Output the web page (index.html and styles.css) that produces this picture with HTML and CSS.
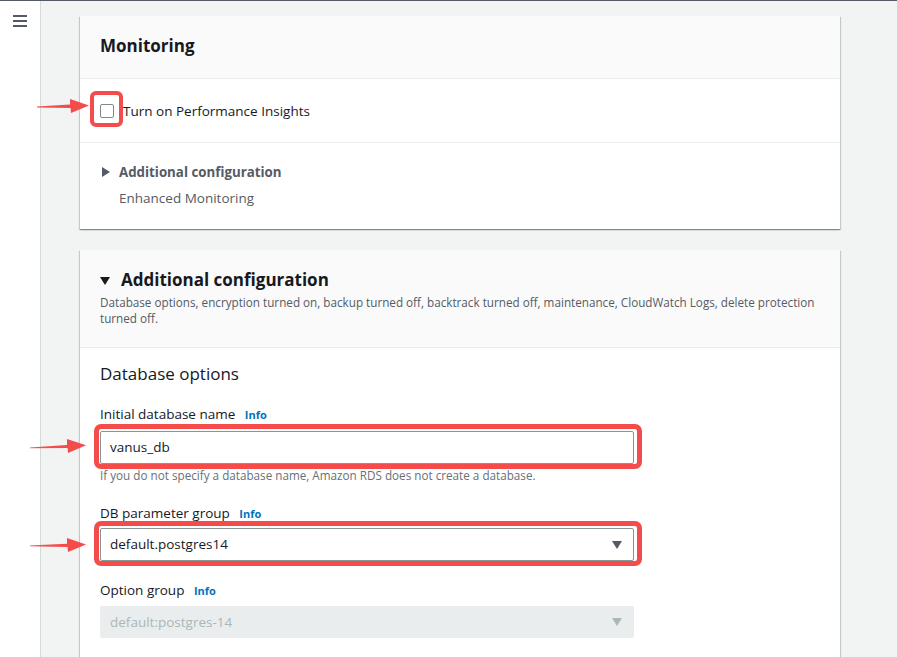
FILE: index.html
```html
<!DOCTYPE html>
<html>
<head>
<meta charset="utf-8">
<link rel="stylesheet" href="styles.css">
</head>
<body>
<div class="top-line"></div>
<div class="layout">
  <aside class="sidebar">
    <svg class="burger" width="14" height="12" viewBox="0 0 14 12"><rect x="0" y="0" width="14" height="2" fill="#545b64"/><rect x="0" y="5" width="14" height="2" fill="#545b64"/><rect x="0" y="10" width="14" height="2" fill="#545b64"/></svg>
  </aside>
  <main class="main">
    <section class="card">
      <div class="card-head">
        <h2 class="card-title">Monitoring</h2>
      </div>
      <div class="row check-row">
        <span class="checkbox hl-check"></span>
        <span class="check-label">Turn on Performance Insights</span>
        <svg class="arrow arrow-1" width="52" height="18" viewBox="0 0 52 18"><polygon points="0,9.6 33,7.6 33,2 52,8.6 34,16 33.6,11 0,10.4" fill="#f44b4b"/></svg>
      </div>
      <div class="row expand-row">
        <div class="expand-title"><span class="tri-right"></span>Additional configuration</div>
        <div class="expand-sub">Enhanced Monitoring</div>
      </div>
    </section>

    <section class="card card-2">
      <div class="card-head head-2">
        <h2 class="card-title"><span class="tri-down"></span>Additional configuration</h2>
        <p class="desc">Database options, encryption turned on, backup turned off, backtrack turned off, maintenance, CloudWatch Logs, delete protection turned off.</p>
      </div>
      <div class="card-body">
        <h3 class="sub-title">Database options</h3>
        <div class="field">
          <div class="label">Initial database name <span class="info">Info</span></div>
          <div class="control-wrap">
            <div class="input hl">vanus_db</div>
            <svg class="arrow arrow-2" width="56" height="18" viewBox="0 0 56 18"><polygon points="0,10.4 37,8 37,2 56,8.2 38,16 37.6,11 0,11.2" fill="#f44b4b"/></svg>
          </div>
          <div class="help">If you do not specify a database name, Amazon RDS does not create a database.</div>
        </div>
        <div class="field field-2">
          <div class="label">DB parameter group <span class="info">Info</span></div>
          <div class="control-wrap">
            <div class="input select hl">default.postgres14<span class="caret"></span></div>
            <svg class="arrow arrow-3" width="56" height="18" viewBox="0 0 56 18"><polygon points="0,9.4 37,7.8 37,2 56,8.6 38,16 37.6,11 0,10.2" fill="#f44b4b"/></svg>
          </div>
        </div>
        <div class="field field-3">
          <div class="label">Option group <span class="info">Info</span></div>
          <div class="input select disabled">default:postgres-14<span class="caret caret-dis"></span></div>
        </div>
      </div>
    </section>
  </main>
</div>
</body>
</html>
```
FILE: styles.css
```css
* { box-sizing: border-box; }
html, body { margin: 0; padding: 0; }
body {
  width: 897px;
  height: 657px;
  overflow: hidden;
  font-family: "Open Sans", "Noto Sans", sans-serif;
  color: #16191f;
  background: #f2f3f3;
}
.top-line { height: 1px; background: #545b64; }
.layout { display: flex; height: 656px; }
.sidebar {
  width: 41px;
  flex: none;
  background: #fff;
  border-right: 1px solid #d5dbdb;
  padding: 14px 0 0 13px;
}
.burger { display: block; }
.main { flex: 1; padding: 15px 0 0 39px; }
.card {
  width: 760px;
  background: #fff;
  box-shadow: 0 1px 1px 0 rgba(0,28,36,.3), 1px 1px 1px 0 rgba(0,28,36,.15), -1px 1px 1px 0 rgba(0,28,36,.15);
}
.card-2 { margin-top: 21px; }
.card-head {
  background: #fafafa;
  border-bottom: 1px solid #eaeded;
  padding: 19px 20px 21px;
}
.card-title {
  margin: 0;
  font-size: 17px;
  font-weight: 700;
  line-height: 22px;
  display: flex;
  align-items: center;
}
.row { position: relative; padding: 0 20px; }
.check-row {
  display: flex;
  align-items: center;
  height: 64px;
  border-bottom: 1px solid #eaeded;
  padding-top: 1px;
}
.checkbox {
  width: 14px;
  height: 14px;
  border: 1.5px solid #7d8a8c;
  border-radius: 2px;
  position: relative;
  flex: none;
}
.hl-check::after {
  content: "";
  position: absolute;
  left: -11px; top: -14px; right: -10px; bottom: -10px;
  border: 4px solid #f44b4b;
  border-radius: 6px;
}
.check-label { margin-left: 9px; font-size: 13.5px; line-height: 22px; }
.arrow { position: absolute; }
.arrow-1 { left: -43px; top: 18px; }
.expand-row { padding: 18px 20px 20px 22px; }
.expand-title {
  display: flex;
  align-items: center;
  font-size: 13.3px;
  font-weight: 700;
  color: #545b64;
  line-height: 22px;
}
.tri-right {
  width: 0; height: 0;
  border-top: 5px solid transparent;
  border-bottom: 5px solid transparent;
  border-left: 8px solid #545b64;
  margin-right: 9px;
}
.expand-sub { margin-top: 4px; padding-left: 17px; font-size: 13.5px; line-height: 22px; color: #545b64; }
.tri-down {
  width: 0; height: 0;
  border-left: 5px solid transparent;
  border-right: 5px solid transparent;
  border-top: 8px solid #16191f;
  margin-right: 11px;
  margin-top: 1px;
}
.desc {
  margin: 3px 0 0;
  font-size: 11.7px;
  line-height: 16px;
  color: #545b64;
}
.card-body { padding: 15px 20px 20px; }
.sub-title { margin: 0; font-size: 17px; font-weight: 400; line-height: 22px; }
.field { margin-top: 18px; }
.field-2 { margin-top: 19px; }
.field-3 { margin-top: 18px; }
.label { font-size: 13.5px; line-height: 22px; }
.info { font-size: 11px; font-weight: 700; color: #0073bb; margin-left: 6px; }
.control-wrap { position: relative; margin-top: 5px; }
.field-2 .control-wrap { margin-top: 3px; }
.input {
  width: 534px;
  height: 33px;
  border: 1px solid #879596;
  border-radius: 2px;
  padding: 0 9px;
  font-size: 13.5px;
  line-height: 31px;
  position: relative;
  background: #fff;
}
.hl::after {
  content: "";
  position: absolute;
  left: -7px; top: -8px; right: -9px; bottom: -6px;
  border: 5px solid #f44b4b;
  border-radius: 7px;
}
.select { display: flex; align-items: center; justify-content: space-between; }
.caret {
  width: 0; height: 0;
  border-left: 5px solid transparent;
  border-right: 5px solid transparent;
  border-top: 8px solid #545b64;
  margin-right: 2px;
}
.caret-dis { border-top-color: #aab7b8; }
.disabled {
  margin-top: 4px;
  height: 32px;
  background: #eaeded;
  border-color: #eaeded;
  color: #aab7b8;
}
.help { margin-top: 3px; font-size: 11.7px; line-height: 16px; color: #687078; }
.arrow-2 { left: -70px; top: 6px; }
.arrow-3 { left: -70px; top: 8px; }
```
